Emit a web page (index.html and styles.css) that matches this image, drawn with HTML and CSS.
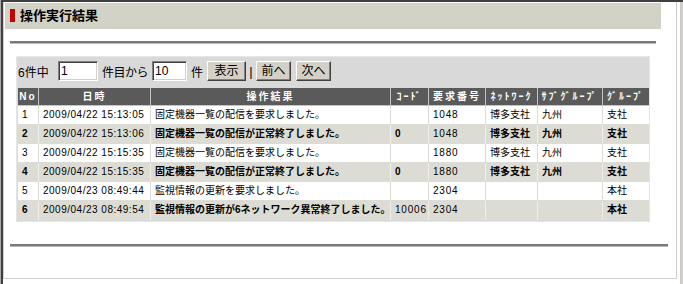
FILE: index.html
```html
<!DOCTYPE html>
<html lang="ja">
<head>
<meta charset="utf-8">
<title>操作実行結果</title>
<link rel="stylesheet" href="styles.css">
</head>
<body>
<div class="window">
  <div class="page">
    <div class="titlebar"><span class="mark"></span><h1 class="title">操作実行結果</h1></div>
    <div class="rule rule-top"></div>
    <div class="panel">
      <div class="pager">
        <span class="lbl lbl-total">6件中</span>
        <input class="field field-from" type="text" value="1">
        <span class="lbl lbl-from">件目から</span>
        <input class="field field-count" type="text" value="10">
        <span class="lbl lbl-unit">件</span>
        <button class="btn btn-show" type="button">表示</button>
        <span class="sep">|</span>
        <button class="btn" type="button">前へ</button>
        <button class="btn btn-next" type="button">次へ</button>
      </div>
      <table class="grid">
        <thead>
          <tr>
            <th class="c-no">No</th>
            <th class="c-date">日時</th>
            <th class="c-msg">操作結果</th>
            <th class="c-code">ｺｰﾄﾞ</th>
            <th class="c-req">要求番号</th>
            <th class="c-net">ﾈｯﾄﾜｰｸ</th>
            <th class="c-sub">ｻﾌﾞｸﾞﾙｰﾌﾟ</th>
            <th class="c-grp">ｸﾞﾙｰﾌﾟ</th>
          </tr>
        </thead>
        <tbody>
          <tr>
            <td>1</td><td class="date">2009/04/22 15:13:05</td><td>固定機器一覧の配信を要求しました。</td><td></td><td class="num">1048</td><td>博多支社</td><td>九州</td><td>支社</td>
          </tr>
          <tr class="alt">
            <td>2</td><td class="date">2009/04/22 15:13:06</td><td>固定機器一覧の配信が正常終了しました。</td><td>0</td><td class="num">1048</td><td>博多支社</td><td>九州</td><td>支社</td>
          </tr>
          <tr>
            <td>3</td><td class="date">2009/04/22 15:15:35</td><td>固定機器一覧の配信を要求しました。</td><td></td><td class="num">1880</td><td>博多支社</td><td>九州</td><td>支社</td>
          </tr>
          <tr class="alt">
            <td>4</td><td class="date">2009/04/22 15:15:35</td><td>固定機器一覧の配信が正常終了しました。</td><td>0</td><td class="num">1880</td><td>博多支社</td><td>九州</td><td>支社</td>
          </tr>
          <tr>
            <td>5</td><td class="date">2009/04/23 08:49:44</td><td>監視情報の更新を要求しました。</td><td></td><td class="num">2304</td><td></td><td></td><td>本社</td>
          </tr>
          <tr class="alt">
            <td>6</td><td class="date">2009/04/23 08:49:54</td><td>監視情報の更新が6ネットワーク異常終了しました。</td><td class="num">10006</td><td class="num">2304</td><td></td><td></td><td>本社</td>
          </tr>
        </tbody>
      </table>
    </div>
    <div class="rule rule-bottom"></div>
  </div>
  <div class="edge"></div>
</div>
</body>
</html>
```

FILE: styles.css
```css
html, body {
  margin: 0;
  padding: 0;
}

body {
  background: #ffffff;
  border-left: 1px solid #a8a8a8;
  font-family: "Liberation Sans", "Noto Sans CJK JP", sans-serif;
  color: #000;
  height: 284px;
  overflow: hidden;
}

.window {
  display: flex;
  height: 284px;
  box-sizing: border-box;
  border-top: 2px solid #404040;
  border-left: 2px solid #404040;
}

.page {
  box-sizing: border-box;
  width: 674px;
  height: 277px;
  border-left: 1px solid #d4d0c8;
  border-right: 1px solid #cfcfcf;
  border-bottom: 1px solid #cfcfcf;
  background: #fff;
}

.edge {
  flex: 1;
  box-sizing: border-box;
  border-left: 1px solid #ffffff;
  background: linear-gradient(to right, #ffffff 0, #ffffff 2px, #c8c8c8 2px, #c8c8c8 3px, #d4d0c8 3px);
}

.titlebar {
  display: flex;
  align-items: center;
  box-sizing: border-box;
  margin: 1px 0 0 1px;
  width: 656px;
  height: 26px;
  padding-left: 5px;
  background: #d2d2c6;
}

.mark {
  width: 5px;
  height: 13px;
  margin-top: -1px;
  margin-right: 5px;
  background: #c40000;
}

.title {
  margin: 0;
  font-size: 13px;
  font-weight: bold;
  line-height: 16px;
}

.rule {
  box-sizing: border-box;
  height: 3px;
  border-top: 2px solid #7a7a7a;
  border-bottom: 1px solid #b8b8b8;
}

.rule-top {
  margin: 12px 0 0 6px;
  width: 646px;
}

.rule-bottom {
  margin: 22px 0 0 6px;
  width: 658px;
}

.panel {
  box-sizing: border-box;
  margin: 12px 0 0 12px;
  width: 634px;
  padding: 4px 0 1px 1px;
  background: #d9d9d9;
  border: 1px solid #e6e6e6;
}

.pager {
  display: flex;
  align-items: center;
  height: 20px;
  font-size: 12px;
}

.lbl {
  white-space: nowrap;
}

.lbl-total { width: 40px; }
.lbl-from { width: 50px; margin-left: 4px; letter-spacing: -0.5px; }
.lbl-unit { width: 16px; margin-left: 4px; }

.field {
  box-sizing: border-box;
  height: 20px;
  margin: 0;
  padding: 0 0 0 2px;
  font-family: "Liberation Sans", sans-serif;
  font-size: 12px;
  background: #fff;
  border-top: 1px solid #808080;
  border-left: 1px solid #808080;
  border-right: 1px solid #ffffff;
  border-bottom: 1px solid #ffffff;
  box-shadow: inset 1px 1px 0 #404040, inset -1px -1px 0 #d4d0c8;
  outline: none;
}

.field-from { width: 40px; }
.field-count { width: 35px; }

.btn {
  box-sizing: border-box;
  width: 35px;
  height: 20px;
  margin: 0;
  padding: 0;
  font-family: "Liberation Sans", "Noto Sans CJK JP", sans-serif;
  font-size: 12px;
  line-height: 16px;
  color: #000;
  background: #d4d0c8;
  border-top: 1px solid #ffffff;
  border-left: 1px solid #ffffff;
  border-right: 1px solid #404040;
  border-bottom: 1px solid #404040;
  box-shadow: inset -1px -1px 0 #808080;
}

.btn-show { width: 39px; }
.btn-next { margin-left: 5px; }

.sep {
  width: 10px;
  text-align: center;
  font-size: 13px;
}

.grid {
  margin-top: 7px;
  width: 631px;
  table-layout: fixed;
  border-collapse: separate;
  border-spacing: 0;
  font-size: 10px;
}

.grid th,
.grid td {
  box-sizing: border-box;
  padding: 0 0 0 3px;
  white-space: nowrap;
  overflow: hidden;
  text-align: left;
}

.grid th {
  height: 18px;
  line-height: 17px;
  padding: 0;
  text-align: center;
  font-weight: bold;
  letter-spacing: 2px;
  color: #fff;
  background: #5a5a5a;
  border-right: 1px solid #c4c4c4;
  border-bottom: 1px solid #c4c4c4;
}

.grid th:last-child { border-right: 0; }

.c-no { width: 21px; }
.c-date { width: 112px; }
.c-msg { width: 240px; }
.c-code { width: 38px; }
.c-req { width: 57px; }
.c-net { width: 52px; }
.c-sub { width: 65px; }
.c-grp { width: 46px; }

.grid td {
  height: 19px;
  line-height: 18px;
  padding-left: 4px;
  border-right: 1px solid #dcdcd4;
  border-bottom: 1px solid #dcdcd4;
  background: #fff;
}

.grid td:last-child { border-right: 0; }

.grid tr.alt td {
  background: #dcdcd4;
  font-weight: bold;
  border-right-color: #f0f0ea;
  border-bottom-color: #dcdcd4;
}

.grid tr.alt td.date,
.grid tr.alt td.num {
  font-weight: normal;
}

.grid tr.alt td:last-child { border-right: 0; }

.date {
  letter-spacing: 0.5px;
}

.num {
  letter-spacing: 0.8px;
}
```
